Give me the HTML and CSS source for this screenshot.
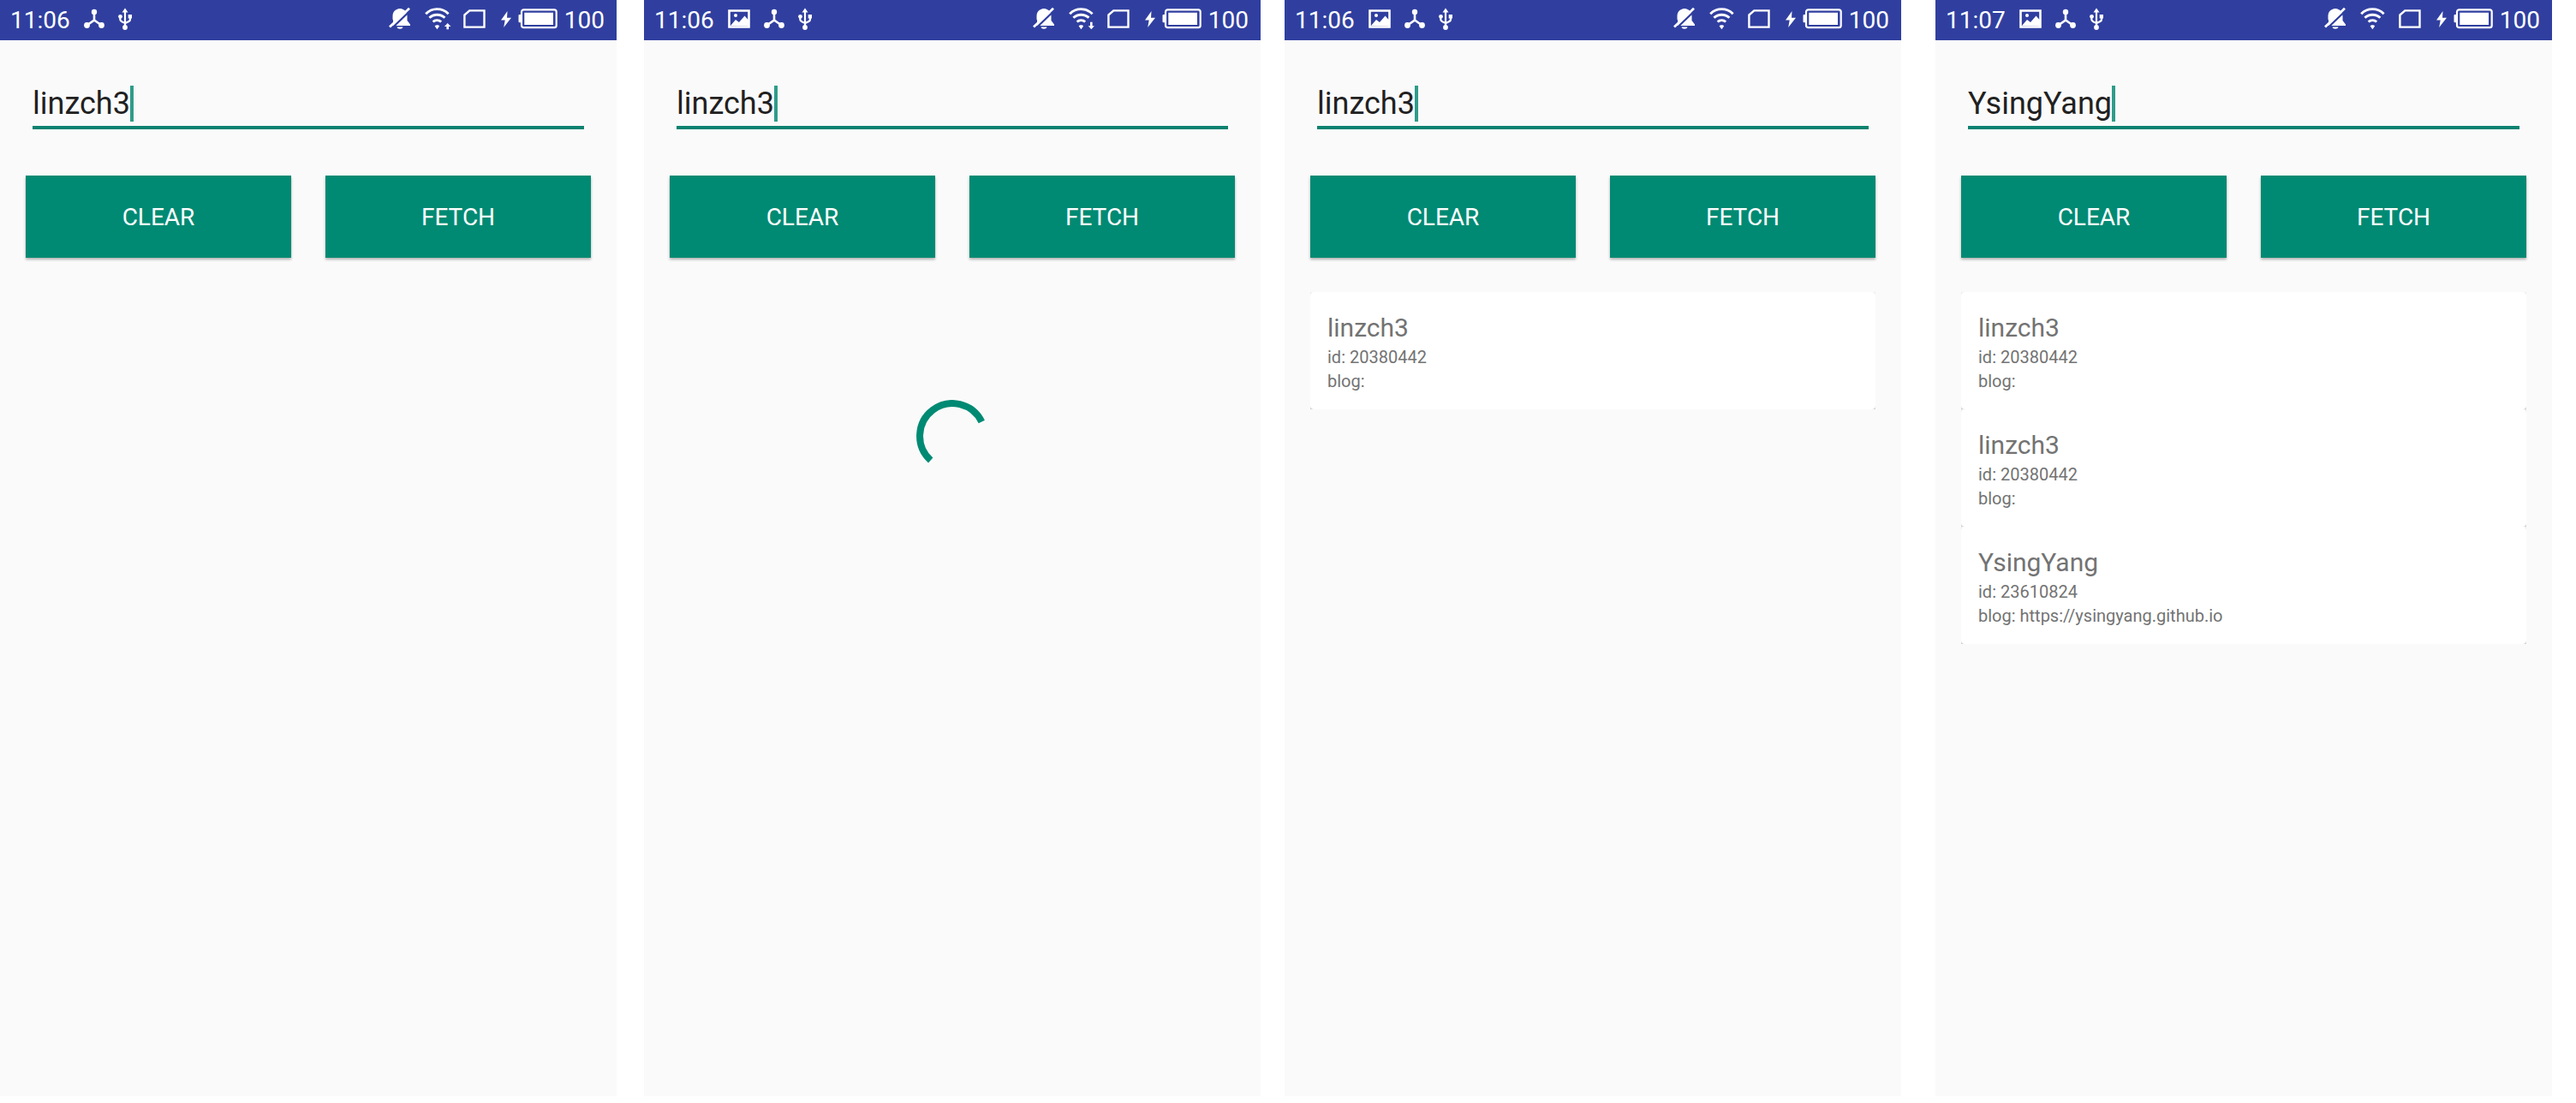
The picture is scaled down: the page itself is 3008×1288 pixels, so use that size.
FILE: index.html
```html
<!DOCTYPE html>
<html lang="en">
<head>
<meta charset="utf-8">
<meta name="viewport" content="width=device-width, initial-scale=1">
<title>GitHub user lookup</title>
<link rel="stylesheet" href="styles.css">
</head>
<body>
<svg class="sprite" aria-hidden="true">
  <symbol id="picture" viewBox="0 0 26 31">
    <path d="M1.5 4.5h23v19h-23z" fill="none" stroke="#fff" stroke-width="2.6"/>
    <path d="M3 22l6-7 4 3 6.500-7.500 4.500 5v7z" fill="#fff"/>
    <circle cx="9" cy="10" r="2" fill="#fff"/>
  </symbol>
  <symbol id="nodes" viewBox="0 0 24 31">
    <path d="M12 6v9.500L3.500 21.500M12 15.500l8.500 6" fill="none" stroke="#fff" stroke-width="2.600"/>
    <g fill="#fff"><circle cx="12" cy="6" r="3.200"/><circle cx="3.500" cy="21.500" r="3.400"/><circle cx="20.500" cy="21.500" r="3.400"/></g>
  </symbol>
  <symbol id="usb" viewBox="0 0 17 31">
    <path d="M8 5v18M2.300 11v3.500c0 2.500 2 3 5.700 4.500M14 11v3.500c0 2.500-2 3-6 4.500" fill="none" stroke="#fff" stroke-width="2.200"/>
    <path d="M8 1.500l3.500 5h-7zM11.700 9H16v4.500h-4.300z" fill="#fff"/>
    <circle cx="2.500" cy="11.300" r="2.400" fill="#fff"/><circle cx="8" cy="24" r="2.900" fill="#fff"/>
  </symbol>
  <symbol id="muted" viewBox="0 0 36 31">
    <path d="M16 2c-5.500.5-8.500 4-8.500 9v6l-2 3.500V22h22.500v-1.500L24.500 16v-5c0-5-3-8.500-8.500-9zM12.500 23.500h7c-.5 3-6.500 3-7 0z" fill="#fff"/>
    <path d="M5.500 26L29 3.500" stroke="#303f9f" stroke-width="2.400"/>
    <path d="M0 22L8 14.500v7z" fill="#303f9f"/>
    <path d="M4 23.500L27 1.800" stroke="#fff" stroke-width="2.800"/>
  </symbol>
  <symbol id="wifi" viewBox="0 0 38 31">
    <g fill="none" stroke="#fff" stroke-width="2.900"><path d="M2.200 8.200a18.500 18.500 0 0 1 26.400 0"/><path d="M6.400 12.800a13 13 0 0 1 18 0"/><path d="M10.600 17.500a7.500 7.500 0 0 1 9.600 0"/></g>
    <path d="M12.700 22.500c.7-1.700 4.700-1.700 5.400 0L15.400 26.200z" fill="#fff"/>
  </symbol>
  <symbol id="wifi-up" viewBox="0 0 38 31">
    <use href="#wifi" width="38" height="31"/>
    <path d="M27.700 19l3.800 4h-2.500v3.200h-2.600V23h-2.500z" fill="#fff"/>
  </symbol>
  <symbol id="wifi-down" viewBox="0 0 38 31">
    <use href="#wifi" width="38" height="31"/>
    <path d="M27.300 26.200l3.600-4h-2.300v-4.500H26v4.500h-2.300z" fill="#fff"/>
  </symbol>
  <symbol id="sim" viewBox="0 0 34 31">
    <path d="M1.400 9.500L7.300 4.400h17.200v19.200H1.400z" fill="none" stroke="#fff" stroke-width="2.400"/>
  </symbol>
  <symbol id="bolt" viewBox="0 0 14 31">
    <path d="M9.500 5L2 15.500h4.700L5.200 24 14 12.700H9z" fill="#fff"/>
  </symbol>
  <symbol id="battery" viewBox="0 0 46 31">
    <rect x="4" y="3.400" width="40.700" height="20.800" rx="2.500" fill="none" stroke="#fff" stroke-width="2.200"/>
    <path d="M7.300 6.700H41V21H7.300zM3.500 9h-2q-1 0-1 1v7.300q0 1 1 1h2z" fill="#fff"/>
  </symbol>
</svg>

<main class="gallery">
  <section class="phone gap-after-first">
    <header class="status">
      <div class="status-left"><span>11:06</span>
        <svg width="24" height="31"><use href="#nodes"/></svg><svg width="17" height="31"><use href="#usb"/></svg></div>
      <div class="status-right"><svg width="36" height="31"><use href="#muted"/></svg><svg width="38" height="31"><use href="#wifi-up"/></svg><svg width="34" height="31"><use href="#sim"/></svg><svg width="14" height="31"><use href="#bolt"/></svg><svg width="46" height="31"><use href="#battery"/></svg><span>100</span></div>
    </header>
    <form class="search">
      <div class="field"><input class="field-input" type="text" aria-label="User name" value="linzch3" size="7"><span class="caret"></span></div>
      <div class="actions"><button class="button" type="button">CLEAR</button><button class="button" type="button">FETCH</button></div>
    </form>
  </section>

  <section class="phone gap-after-second">
    <header class="status">
      <div class="status-left"><span>11:06</span><svg width="26" height="31"><use href="#picture"/></svg><svg width="24" height="31"><use href="#nodes"/></svg><svg width="17" height="31"><use href="#usb"/></svg></div>
      <div class="status-right"><svg width="36" height="31"><use href="#muted"/></svg><svg width="38" height="31"><use href="#wifi-down"/></svg><svg width="34" height="31"><use href="#sim"/></svg><svg width="14" height="31"><use href="#bolt"/></svg><svg width="46" height="31"><use href="#battery"/></svg><span>100</span></div>
    </header>
    <form class="search">
      <div class="field"><input class="field-input" type="text" aria-label="User name" value="linzch3" size="7"><span class="caret"></span></div>
      <div class="actions"><button class="button" type="button">CLEAR</button><button class="button" type="button">FETCH</button></div>
    </form>
    <div class="loading" role="status" aria-label="Loading">
      <svg width="84" height="84" viewBox="-42 -42 84 84"><path d="M-25.300 28.400A38 38 0 1 1 34.300-16.400" fill="none" stroke="#008a73" stroke-width="8"/></svg>
    </div>
  </section>

  <section class="phone gap-after-third">
    <header class="status">
      <div class="status-left"><span>11:06</span><svg width="26" height="31"><use href="#picture"/></svg><svg width="24" height="31"><use href="#nodes"/></svg><svg width="17" height="31"><use href="#usb"/></svg></div>
      <div class="status-right"><svg width="36" height="31"><use href="#muted"/></svg><svg width="38" height="31"><use href="#wifi"/></svg><svg width="34" height="31"><use href="#sim"/></svg><svg width="14" height="31"><use href="#bolt"/></svg><svg width="46" height="31"><use href="#battery"/></svg><span>100</span></div>
    </header>
    <form class="search">
      <div class="field"><input class="field-input" type="text" aria-label="User name" value="linzch3" size="7"><span class="caret"></span></div>
      <div class="actions"><button class="button" type="button">CLEAR</button><button class="button" type="button">FETCH</button></div>
    </form>
    <ul class="results">
      <li class="result"><article class="card"><h2 class="card-name">linzch3</h2><p class="card-line">id: 20380442</p><p class="card-line">blog:</p></article></li>
    </ul>
  </section>

  <section class="phone">
    <header class="status">
      <div class="status-left"><span>11:07</span><svg width="26" height="31"><use href="#picture"/></svg><svg width="24" height="31"><use href="#nodes"/></svg><svg width="17" height="31"><use href="#usb"/></svg></div>
      <div class="status-right"><svg width="36" height="31"><use href="#muted"/></svg><svg width="38" height="31"><use href="#wifi"/></svg><svg width="34" height="31"><use href="#sim"/></svg><svg width="14" height="31"><use href="#bolt"/></svg><svg width="46" height="31"><use href="#battery"/></svg><span>100</span></div>
    </header>
    <form class="search">
      <div class="field"><input class="field-input" type="text" aria-label="User name" value="YsingYang" size="9"><span class="caret"></span></div>
      <div class="actions"><button class="button" type="button">CLEAR</button><button class="button" type="button">FETCH</button></div>
    </form>
    <ul class="results">
      <li class="result"><article class="card"><h2 class="card-name">linzch3</h2><p class="card-line">id: 20380442</p><p class="card-line">blog:</p></article></li>
      <li class="result"><article class="card"><h2 class="card-name">linzch3</h2><p class="card-line">id: 20380442</p><p class="card-line">blog:</p></article></li>
      <li class="result"><article class="card"><h2 class="card-name">YsingYang</h2><p class="card-line">id: 23610824</p><p class="card-line">blog: https://ysingyang.github.io</p></article></li>
    </ul>
  </section>
</main>
</body>
</html>
```
FILE: styles.css
```css
* {
  box-sizing: border-box;
}

body {
  margin: 0;
  background: #fff;
  font-family: Roboto, "Liberation Sans", sans-serif;
}

.sprite {
  display: none;
}

.gallery {
  display: flex;
  min-height: 100vh;
  padding: 0 28px 8px 0;
}

.phone {
  flex: 1 1 0;
  min-width: 0;
  background: #fafafa;
}

.gap-after-first {
  margin-right: 32px;
}

.gap-after-second {
  margin-right: 28px;
}

.gap-after-third {
  margin-right: 40px;
}

/* Status bar */
.status {
  display: flex;
  justify-content: space-between;
  align-items: center;
  height: 47px;
  padding: 0 14px 0 12px;
  background: #303f9f;
  color: #fff;
  font-size: 28px;
  line-height: 31px;
}

.status-left,
.status-right {
  display: flex;
  align-items: center;
  gap: 16px;
}

.status-right {
  gap: 8px;
}

/* Search form */
.search {
  padding: 53px 30px 0;
}

.field {
  display: flex;
  height: 51px;
  margin: 0 8px;
  border-bottom: 4px solid #0b8270;
}

.field-input {
  field-sizing: content;
  height: 42px;
  padding: 0;
  border: 0;
  outline: 0;
  background: none;
  color: #212121;
  font: inherit;
  font-size: 36px;
}

.caret {
  width: 4px;
  height: 42px;
  background: #2f9c89;
}

.actions {
  display: flex;
  gap: 40px;
  margin-top: 54px;
}

.button {
  flex: 1;
  height: 96px;
  padding: 0;
  border: 0;
  background: #008a73;
  box-shadow: 0 2px 3px rgba(0, 0, 0, 0.3);
  color: #fff;
  font: inherit;
  font-size: 28px;
}

.loading {
  display: flex;
  justify-content: center;
  margin-top: 166px;
}

/* Results */
.results {
  margin: 40px 30px 0;
  padding: 0;
  list-style: none;
}

.result {
  overflow: hidden;
}

.card {
  padding: 22px 20px 19px;
  border-radius: 4px;
  background: #fff;
  box-shadow: 0 1px 3px rgba(0, 0, 0, 0.4);
  color: #737373;
}

.card-name {
  margin: 0;
  font-size: 30px;
  font-weight: 400;
  line-height: 40px;
}

.card-line {
  margin: 0;
  font-size: 20px;
  line-height: 28px;
}
```
